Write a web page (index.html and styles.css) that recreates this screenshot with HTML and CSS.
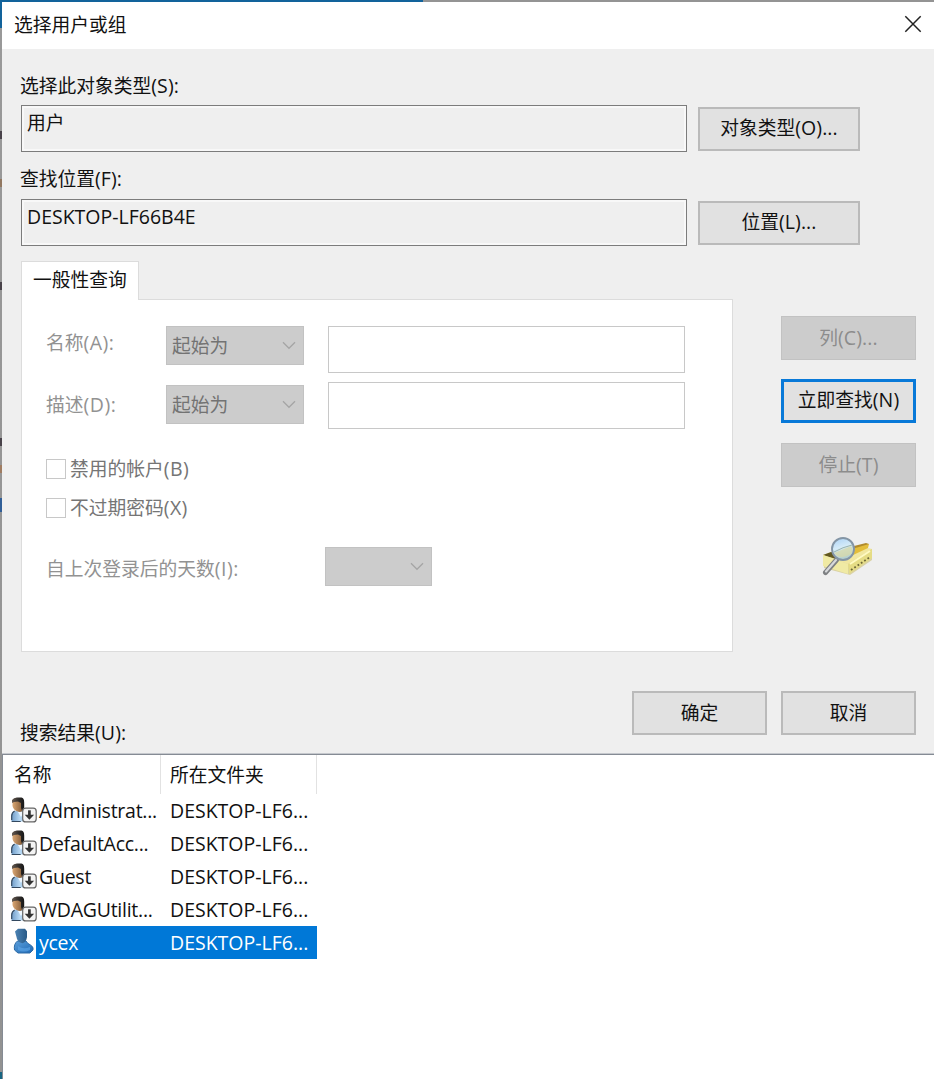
FILE: index.html
```html
<!DOCTYPE html>
<html lang="zh-CN">
<head>
<meta charset="utf-8">
<title>选择用户或组</title>
<link rel="stylesheet" href="styles.css">
</head>
<body>
<svg class="defs" width="0" height="0" aria-hidden="true">
  <defs>
    <linearGradient id="hair" x1="0" x2="1"><stop offset="0" stop-color="#665b52"/><stop offset=".5" stop-color="#34302d"/><stop offset="1" stop-color="#171717"/></linearGradient>
    <linearGradient id="skin" x1="0" x2="1"><stop offset="0" stop-color="#d9a673"/><stop offset="1" stop-color="#76502f"/></linearGradient>
    <linearGradient id="shirt" x1="0" x2="1"><stop offset="0" stop-color="#6f9cc8"/><stop offset=".5" stop-color="#b9daf5"/><stop offset="1" stop-color="#7fa8cf"/></linearGradient>
    <linearGradient id="blue" x1="0" x2="1" y2="1"><stop offset="0" stop-color="#5b9fdb"/><stop offset="1" stop-color="#1e68b4"/></linearGradient>
    <linearGradient id="head" x1="0" x2="1"><stop offset="0" stop-color="#4c83b4"/><stop offset="1" stop-color="#285a87"/></linearGradient>
    <linearGradient id="lens" x1="0" x2=".3" y2="1"><stop offset="0" stop-color="#a9d0f5"/><stop offset=".5" stop-color="#d5ebf8"/><stop offset="1" stop-color="#b5cfcd"/></linearGradient>
    <symbol id="user-off" viewBox="0 0 26 26">
      <path d="M.5 24.500V19q0-4 4-5l5-1 6 2 2 9.500z" fill="url(#shirt)"/>
      <path d="M.7 23v-4q0-3.500 3-5M.7 24.500h9" fill="none" stroke="#33485e" stroke-width="1.200"/>
      <path d="M7 15l3 5 3-5" fill="#eef7ff"/>
      <path d="M1.500 4q1-3 5-3h3.500q3 1 3 5v5q-1 4-4.500 4Q2.500 14 1.500 9z" fill="url(#skin)"/>
      <path d="M1 6V3Q3 0 7 .5h3.500q2.700.5 2.700 5v5l-2 3.500-1.200-3V6L7 4.500 3 5z" fill="url(#hair)"/>
      <rect x="11.700" y="11.200" width="13.500" height="13.700" rx="3" fill="#f4f4f4" stroke="#666" stroke-width="1.200"/>
      <path d="M18.400 13.300v6" stroke="#333" stroke-width="2.700"/><path d="M13.700 17.800h9.400l-4.700 5z" fill="#333"/>
    </symbol>
    <symbol id="user-on" viewBox="0 0 26 26">
      <path d="M3.500 22q-1-6 3-9h8.500q1 2.500 4.500 4 3.500 2 2.500 5l-3 3H7z" fill="url(#blue)" stroke="#2c6ba6"/>
      <path d="M4 3.500L7 .8h7l2 2.500v6q-1 5-4.500 6Q6 14 5.500 9z" fill="url(#head)"/>
      <path d="M7 18q5 4 12 1v3q-6 3-12 0z" fill="#5fa9e9" opacity=".6"/>
    </symbol>
    <symbol id="arrow" viewBox="0 0 14 9"><path d="M1 1.300l6 6 6-6" fill="none" stroke="#a5a5a5" stroke-width="1.300"/></symbol>
  </defs>
</svg>
<div class="screen">
  <div class="backdrop-top"></div>
  <div class="backdrop-left">
    <i class="mark m1"></i><i class="mark m2"></i><i class="mark m3"></i><i class="mark m4"></i><i class="mark m5"></i><i class="mark m6"></i>
  </div>
  <main class="dialog">
    <header class="titlebar">
      <span>选择用户或组</span>
      <svg class="close" viewBox="0 0 18 18"><path d="M1.300 1.300l15.400 15.400M16.700 1.300L1.300 16.700" stroke="#222" stroke-width="1.500"/></svg>
    </header>
    <section class="body">
      <div class="label">选择此对象类型<b>(S):</b></div>
      <div class="pick"><div class="field">用户</div><div class="btn wide">对象类型<b>(O)...</b></div></div>
      <div class="label second">查找位置<b>(F):</b></div>
      <div class="pick"><div class="field"><b>DESKTOP-LF66B4E</b></div><div class="btn wide">位置<b>(L)...</b></div></div>
      <div class="query">
        <div class="tabs">
          <div class="tab">一般性查询</div>
          <div class="panel">
            <div class="criteria">
              <span class="name">名称<b>(A):</b></span><div class="select">起始为<svg><use href="#arrow"/></svg></div><div class="input"></div>
            </div>
            <div class="criteria next">
              <span class="name">描述<b>(D):</b></span><div class="select">起始为<svg><use href="#arrow"/></svg></div><div class="input"></div>
            </div>
            <div class="check first"><i></i>禁用的帐户<b>(B)</b></div>
            <div class="check"><i></i>不过期密码<b>(X)</b></div>
            <div class="days"><span>自上次登录后的天数<b>(I):</b></span><div class="select small"><svg><use href="#arrow"/></svg></div></div>
          </div>
        </div>
        <div class="actions">
          <div class="btn disabled">列<b>(C)...</b></div>
          <div class="btn primary">立即查找<b>(N)</b></div>
          <div class="btn disabled">停止<b>(T)</b></div>
          <svg class="finder" viewBox="0 0 52 40">
            <path d="M2 19l23-9 25 2v11L28 38 2 31z" fill="#c8b966" opacity=".55"/>
            <path d="M1 18l25 9 24-15-22-4z" fill="#f1e7a0"/>
            <path d="M1 18l8-3 12 4-7 3z" fill="#625820"/>
            <path d="M20 15l24-8h3l-1 4-17 8z" fill="#e3bd3a"/>
            <path d="M28 10l16-4 3 1-17 5z" fill="#b08a2b"/>
            <path d="M1 18l25 9v10L1 29z" fill="#f0eaa4"/>
            <path d="M26 27l24-15v9L27 37z" fill="#e5dc85"/>
            <path d="M29 33l19-13" stroke="#6d6738" stroke-width="1.800" stroke-dasharray="1.800 2.200"/>
            <path d="M28 27l20-13" stroke="#fffac2" stroke-width="2"/>
            <path d="M14.500 23L3.500 35.500" stroke="#7e8083" stroke-width="5" stroke-linecap="round"/>
            <path d="M14 23L4 34.500" stroke="#d7d9db" stroke-width="2.200" stroke-linecap="round"/>
            <circle cx="21" cy="12" r="11" fill="url(#lens)" stroke="#8495a5" stroke-width="1.900"/>
            <path d="M12 16l17-7q3 3 0 8-8 5-14 2z" fill="#d8d8a4" opacity=".7"/>
            <path d="M12 15q9-5 18-7" fill="none" stroke="#9ab3ae"/>
          </svg>
        </div>
      </div>
      <div class="footer">
        <div class="label">搜索结果<b>(U):</b></div>
        <div class="confirm"><div class="btn">确定</div><div class="btn">取消</div></div>
      </div>
    </section>
    <section class="results">
      <div class="head"><span class="c1">名称</span><span class="c2">所在文件夹</span></div>
      <div class="row"><svg><use href="#user-off"/></svg><div class="cells"><b class="user">Administrat...</b><b>DESKTOP-LF6...</b></div></div>
      <div class="row"><svg><use href="#user-off"/></svg><div class="cells"><b class="user">DefaultAcc...</b><b>DESKTOP-LF6...</b></div></div>
      <div class="row"><svg><use href="#user-off"/></svg><div class="cells"><b class="user">Guest</b><b>DESKTOP-LF6...</b></div></div>
      <div class="row"><svg><use href="#user-off"/></svg><div class="cells"><b class="user">WDAGUtilit...</b><b>DESKTOP-LF6...</b></div></div>
      <div class="row selected"><svg><use href="#user-on"/></svg><div class="cells"><b class="user">ycex</b><b>DESKTOP-LF6...</b></div></div>
    </section>
  </main>
</div>
</body>
</html>
```
FILE: styles.css
```css
* { box-sizing: border-box; }
body { margin: 0; overflow: hidden; background: #fff; color: #111; font: 18.75px/22px "Open Sans", "Noto Sans CJK SC", sans-serif; }
b { font-weight: 400; font-size: 19.5px; line-height: 20px; letter-spacing: .1px; }
.defs { display: block; position: absolute; }
.screen { width: 934px; height: 1079px; display: grid; grid-template: 2px 1077px / 2px 932px; }
.backdrop-top { grid-column: 1 / 3; background: linear-gradient(90deg, #12639b 423px, #949494 423px); }
.backdrop-left { position: relative; background: linear-gradient(#12639b 26px, #999 26px, #929292 1070px, #176582 1070px); }
.mark { position: absolute; left: 0; width: 2px; height: 8px; background: #49434a; }
.m1 { top: 129px; } .m2 { top: 177px; background: #927861; } .m3 { top: 280px; }
.m4 { top: 436px; } .m5 { top: 463px; background: #a07d62; } .m6 { top: 496px; height: 14px; background: #315f98; }
.dialog { display: flex; flex-direction: column; background: #efefef; }
.titlebar { height: 47px; background: #fff; display: flex; justify-content: space-between; align-items: center; padding: 0 12px 2px 12px; }
.close { width: 18px; height: 18px; margin-top: -1px; }
.body { height: 705px; padding: 26px 18px 0 18px; }
.label { height: 22px; white-space: nowrap; }
.pick { display: flex; gap: 12px; margin-top: 8px; align-items: center; }
.field { width: 666px; height: 47px; margin-left: 1px; border: 1px solid #7c7c7c; box-shadow: inset 0 0 0 2px #f8f8f8; padding: 6px 5px; }
.field b { letter-spacing: 0; }
.btn { width: 135px; height: 44px; flex: none; display: flex; align-items: center; justify-content: center; background: #e1e1e1; border: 2px solid #bababa; white-space: nowrap; padding-bottom: 1px; }
.wide { width: 162px; margin-left: -1px; }
.second { margin-top: 16px; }
.second + .pick { margin-top: 9px; }
.query { display: flex; justify-content: space-between; margin-top: 15px; height: 391px; }
.tabs { width: 713px; padding-left: 1px; }
.tab { width: 118px; height: 39px; position: relative; z-index: 1; background: #fff; border: 1px solid #dcdcdc; border-bottom: 0; padding: 7px 0 0 11px; white-space: nowrap; }
.panel { width: 712px; height: 353px; margin-top: -1px; background: #fff; border: 1px solid #dcdcdc; padding: 26px 24px; color: #929292; }
.criteria { display: flex; align-items: flex-start; height: 47px; }
.name { width: 120px; padding-top: 6px; }
.name b, .days b { letter-spacing: .5px; }
.select { width: 138px; height: 39px; margin-right: 24px; display: flex; align-items: center; justify-content: space-between; padding: 0 7px 0 5px; background: #ccc; border: 1px solid #c2c2c2; color: #737373; }
.select svg { width: 14px; height: 9px; }
.input { width: 357px; height: 47px; border: 1px solid #c8c8c8; }
.next { margin-top: 9px; }
.next .name { padding-top: 12px; }
.next .select { margin-top: 3px; }
.check { height: 22px; margin-top: 17px; display: flex; align-items: center; color: #757575; }
.check.first { margin-top: 29px; }
.check i { width: 20px; height: 20px; border: 1px solid #c8c8c8; margin-right: 4px; }
.check b { letter-spacing: .4px; }
.days { display: flex; align-items: flex-start; margin-top: 28px; height: 40px; }
.days span { width: 279px; padding-top: 11px; white-space: nowrap; }
.small { width: 107px; margin: 0; justify-content: flex-end; }
.actions { width: 135px; padding-top: 55px; }
.actions .btn + .btn { margin-top: 19px; }
.actions .btn.primary + .btn { margin-top: 20px; }
.btn.disabled { background: #ccc; border: 1px solid #c2c2c2; color: #8c8c8c; }
.btn.primary { border: 3px solid #0879d8; padding-bottom: 2px; }
.finder { display: block; width: 52px; height: 40px; margin: 50px 0 0 41px; }
.footer { display: flex; justify-content: space-between; padding-top: 39px; }
.footer .label { margin-top: 31px; }
.confirm { display: flex; gap: 14px; }
.results { height: 325px; background: #fff; border: 1px solid #858b94; border-width: 1px 0 0 1px; box-shadow: 0 -1px #c5c8cd; }
.head { height: 39px; display: flex; }
.head span { border-right: 1px solid #e2e2e2; padding: 9px 0 0 11px; }
.head .c1 { width: 158px; }
.head .c2 { width: 156px; padding-left: 9px; }
.row { height: 33px; display: flex; }
.row svg { width: 26px; height: 26px; margin: 3px 0 0 8px; flex: none; }
.selected svg { margin-top: 2px; }
.cells { width: 281px; height: 33px; margin-left: -1px; display: flex; align-items: center; padding: 1px 0 0 3px; white-space: nowrap; }
.cells b { letter-spacing: 0; }
.cells .user { width: 131px; letter-spacing: -.25px; }
.selected .cells { background: #0078d7; color: #fff; }
```
